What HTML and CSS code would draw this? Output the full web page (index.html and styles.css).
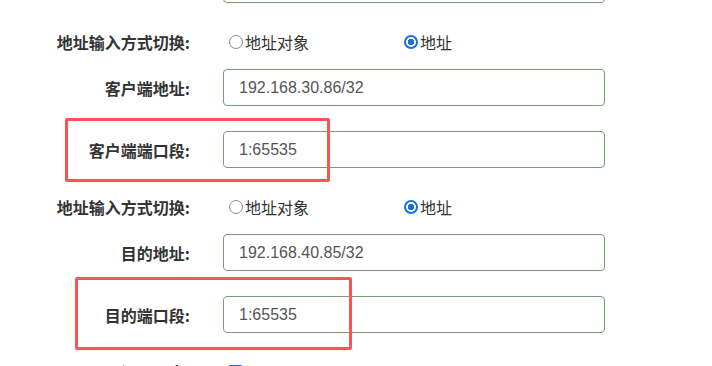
FILE: index.html
```html
<!DOCTYPE html>
<html lang="zh-CN">
<head>
    <meta charset="UTF-8">
    <title>访问规则</title>
    <link rel="stylesheet" href="styles.css">
</head>
<body>

    <div class="page">
        <form class="rule-form">
            <div class="form-row">
                <label class="form-label">服务端端口段:</label>
                <input class="form-input" type="text" value="">
            </div>

            <div class="form-row radio-row">
                <span class="form-label">地址输入方式切换:</span>
                <div class="radio-group">
                    <label class="radio-option"><input type="radio" name="mode1">地址对象</label>
                    <label class="radio-option"><input type="radio" name="mode1" checked>地址</label>
                </div>
            </div>

            <div class="form-row">
                <label class="form-label">客户端地址:</label>
                <input class="form-input" type="text" value="192.168.30.86/32">
            </div>

            <div class="form-row">
                <label class="form-label">客户端端口段:</label>
                <input class="form-input" type="text" value="1:65535">
            </div>

            <div class="form-row radio-row">
                <span class="form-label">地址输入方式切换:</span>
                <div class="radio-group">
                    <label class="radio-option"><input type="radio" name="mode2">地址对象</label>
                    <label class="radio-option"><input type="radio" name="mode2" checked>地址</label>
                </div>
            </div>

            <div class="form-row">
                <label class="form-label">目的地址:</label>
                <input class="form-input" type="text" value="192.168.40.85/32">
            </div>

            <div class="form-row">
                <label class="form-label">目的端口段:</label>
                <input class="form-input" type="text" value="1:65535">
            </div>

            <div class="form-row radio-row">
                <span class="form-label">记录日志:</span>
                <input class="form-check" type="checkbox" checked>
            </div>
        </form>

        <!-- highlight boxes drawn over the screenshot -->
        <div class="mark mark-client"></div>
        <div class="mark mark-dest"></div>
    </div>

</body>
</html>
```

FILE: styles.css
```css
* {
    box-sizing: border-box;
}

body {
    margin: 0;
    background-color: #ffffff;
    font-family: "Liberation Sans", "Noto Sans CJK SC", sans-serif;
    color: #333333;
    overflow: hidden;
}

.page {
    position: relative;
    height: 366px;
    overflow: hidden; /* stops the form's negative margin collapsing through */
}

.rule-form {
    display: flex; /* column flex so row margins don't collapse */
    flex-direction: column;
    margin-top: -34px; /* first field is scrolled mostly out of view */
}

.form-row {
    display: flex;
    align-items: center;
    flex-shrink: 0;
    margin-bottom: 25px;
}

.radio-row {
    height: 20px;
    margin-top: 4px;
    margin-bottom: 17px;
}

.form-label {
    flex: 0 0 190px;
    text-align: right;
    font-family: "Noto Sans CJK SC", sans-serif;
    font-size: 16px;
    font-weight: 700;
    color: #333333;
    margin-right: 33px;
    line-height: 20px;
}

.form-input {
    width: 382px;
    height: 37px;
    border: 1px solid #78a078;
    border-radius: 4px;
    padding: 0 15px;
    font-family: "Liberation Sans", "Noto Sans CJK SC", sans-serif;
    font-size: 16px;
    color: #555555;
    background-color: #ffffff;
    outline: none;
}

.radio-group {
    display: flex;
    align-items: center;
}

.radio-option {
    display: flex;
    align-items: center;
    width: 175px;
    font-family: "Noto Sans CJK SC", sans-serif;
    font-size: 16px;
    color: #333333;
    line-height: 20px;
}

.radio-option input {
    appearance: none;
    width: 14px;
    height: 14px;
    margin: 0 2px 0 6px;
    border: 1.5px solid #8a8a8f;
    border-radius: 50%;
    background-color: #ffffff;
}

.radio-option input:checked {
    border: 2px solid #1a6fde;
    background: radial-gradient(circle, #1a6fde 0 3px, #ffffff 3.5px);
}

.form-check {
    appearance: none;
    width: 15px;
    height: 15px;
    margin: 0 0 0 5px;
    border-radius: 3px;
    background-color: #1a6fde;
}

/* red highlight annotations */
.mark {
    position: absolute;
    border: 3px solid #ff5353;
    border-radius: 2px;
}

.mark-client {
    left: 65px;
    top: 118px;
    width: 265px;
    height: 64px;
}

.mark-dest {
    left: 75px;
    top: 277px;
    width: 277px;
    height: 73px;
}
```
